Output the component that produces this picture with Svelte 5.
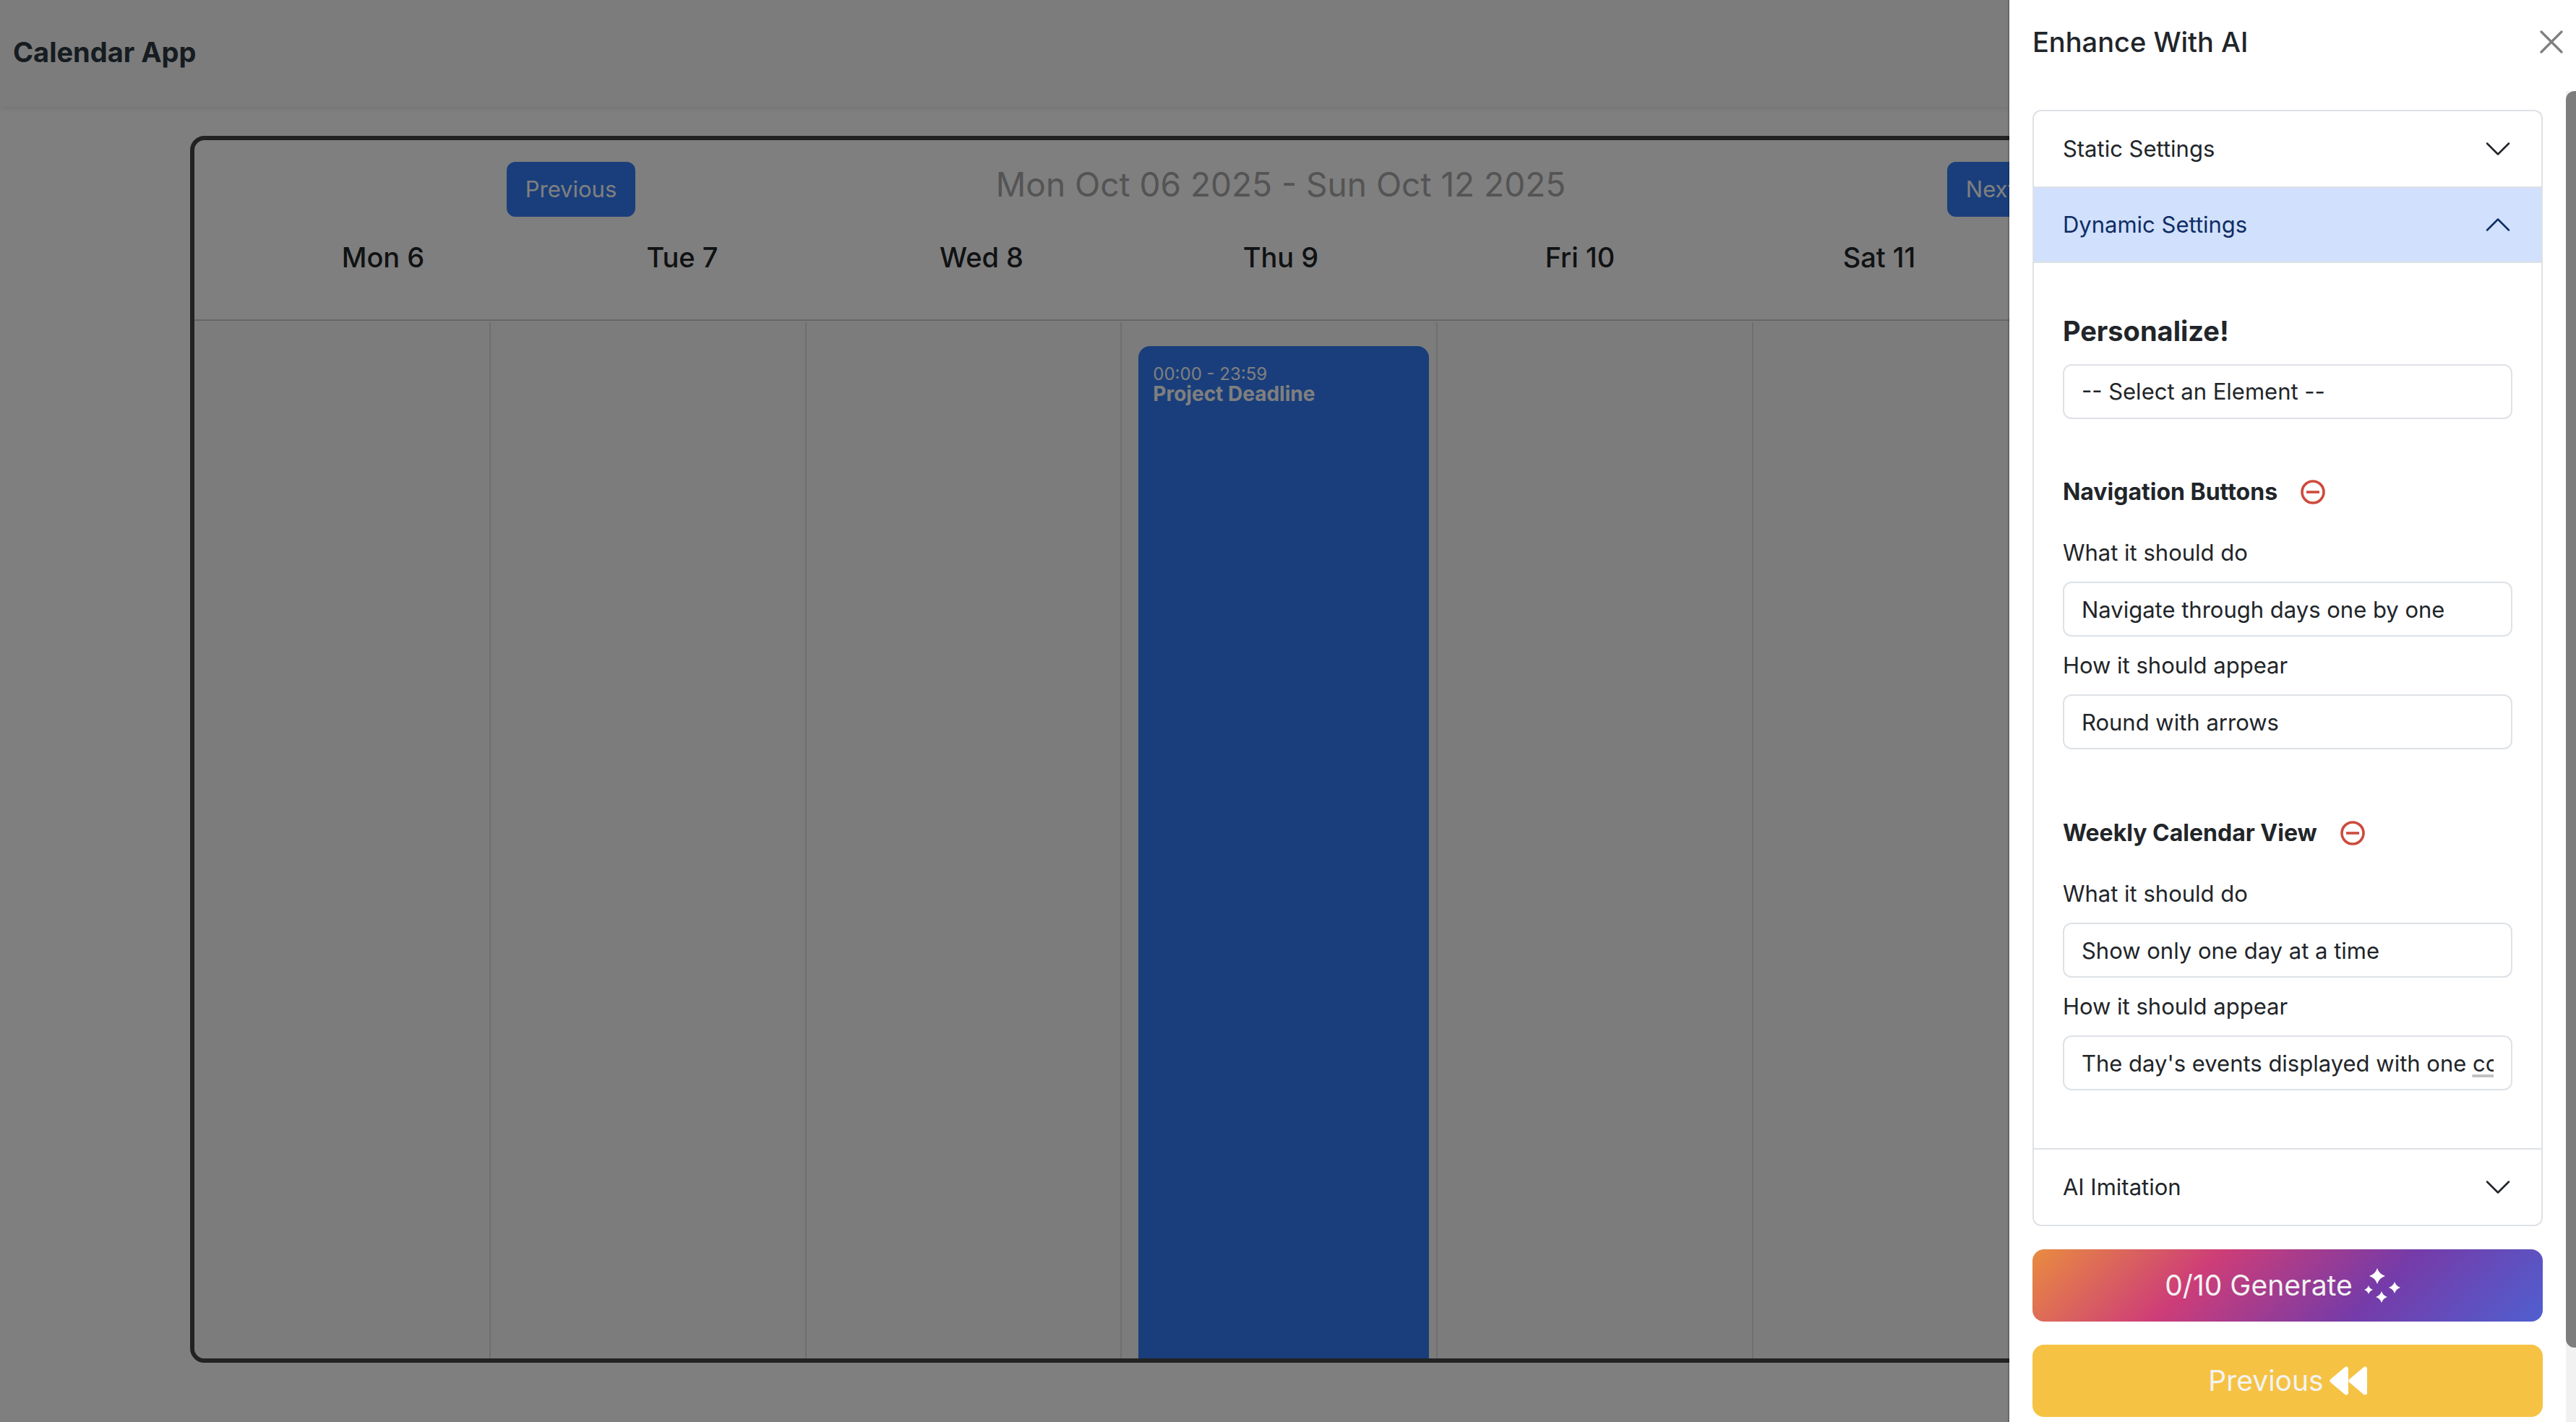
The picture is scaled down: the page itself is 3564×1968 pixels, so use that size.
<script>
  const days = ['Mon 6', 'Tue 7', 'Wed 8', 'Thu 9', 'Fri 10', 'Sat 11', 'Sun 12'];
  const events = { 3: { time: '00:00 - 23:59', title: 'Project Deadline' } };
  let groups = $state([
    { id: 'nav', name: 'Navigation Buttons', what: 'Navigate through days one by one', how: 'Round with arrows' },
    { id: 'week', name: 'Weekly Calendar View', what: 'Show only one day at a time', how: "The day's events displayed with one column", flagged: true }
  ]);

  // Four-pointed sparkle centred on (x, y) with arm length r.
  const spark = (x, y, r) => {
    const c = r * 0.24;
    return `M${x} ${y - r}Q${x + c} ${y - c} ${x + r} ${y}Q${x + c} ${y + c} ${x} ${y + r}Q${x - c} ${y + c} ${x - r} ${y}Q${x - c} ${y - c} ${x} ${y - r}Z`;
  };
  const sparks = [[18, 11, 11], [42, 27, 8], [24, 40, 8], [6, 30, 6]];
</script>

{#snippet chevron(up)}
  <svg class="chevron" class:up viewBox="0 0 16 16" aria-hidden="true">
    <path d="M2 5l6 6 6-6" fill="none" stroke="currentColor" stroke-linecap="round" stroke-linejoin="round" />
  </svg>
{/snippet}

<div class="page">
  <header class="topbar"><h1>Calendar App</h1></header>
  <main>
    <section class="calendar">
      <div class="toolbar">
        <button class="nav">Previous</button>
        <h2>Mon Oct 06 2025 - Sun Oct 12 2025</h2>
        <button class="nav">Next</button>
      </div>
      <div class="daynames">
        {#each days as day}<div>{day}</div>{/each}
      </div>
      <div class="week">
        {#each days as day, i}
          <div class="day">
            {#if events[i]}
              <article class="event">
                <span>{events[i].time}</span>
                <strong>{events[i].title}</strong>
              </article>
            {/if}
          </div>
        {/each}
      </div>
    </section>
  </main>
</div>
<div class="backdrop"></div>

<aside class="panel" aria-label="Enhance With AI">
  <div class="panel-head">
    <h2>Enhance With AI</h2>
    <button class="close" aria-label="Close">
      <svg viewBox="0 0 16 16"><path d="M1 1l14 14M15 1L1 15" stroke="currentColor" stroke-width="1.6" stroke-linecap="round" /></svg>
    </button>
  </div>
  <div class="panel-main">
    <div class="panel-body">
      <div class="accordion">
        <button class="acc">Static Settings {@render chevron(false)}</button>
        <button class="acc open" aria-expanded="true">Dynamic Settings {@render chevron(true)}</button>
        <div class="acc-body">
          <label class="personalize" for="element">Personalize!</label>
          <select id="element"><option>-- Select an Element --</option></select>
          {#each groups as g (g.id)}
            <fieldset>
              <div class="group-head">
                <h3>{g.name}</h3>
                <button aria-label="Remove {g.name}">
                  <svg viewBox="0 0 34 34"><circle cx="17" cy="17" r="15" fill="none" stroke="currentColor" stroke-width="3.6" /><path d="M8 17h18" stroke="currentColor" stroke-width="3.6" /></svg>
                </button>
              </div>
              <label for="{g.id}-what">What it should do</label>
              <input id="{g.id}-what" type="text" bind:value={g.what} />
              <label for="{g.id}-how">How it should appear</label>
              <div class="field" class:flagged={g.flagged}>
                <input id="{g.id}-how" type="text" bind:value={g.how} />
              </div>
            </fieldset>
          {/each}
        </div>
        <button class="acc">AI Imitation {@render chevron(false)}</button>
      </div>
      <button class="action generate">
        0/10 Generate
        <svg class="stars" viewBox="0 0 50 48" fill="#fff" aria-hidden="true">
          {#each sparks as [x, y, r]}<path d={spark(x, y, r)} />{/each}
        </svg>
      </button>
      <button class="action previous">
        Previous
        <svg class="rewind" viewBox="0 0 52 40" fill="#fff" stroke="#fff" stroke-width="6" stroke-linejoin="round" aria-hidden="true">
          <path d="M3.500 20L23 3.500V36.500Z" />
          <path d="M29.500 20L49 3.500V36.500Z" />
        </svg>
      </button>
    </div>
    <div class="track"><div class="thumb"></div></div>
  </div>
</aside>

<style>
  :global(body) { margin: 0; background: #fff; }
  :global(*) { box-sizing: border-box; }
  h1, h2, h3 { margin: 0; }
  button, input, select { font: inherit; color: inherit; }
  button { border: 0; background: none; padding: 0; }
  .page, .panel { font-family: Inter, 'Noto Sans', sans-serif; font-size: 31px; line-height: 48px; color: #212529; }
  .page { height: 100vh; display: flex; flex-direction: column; overflow: hidden; padding-right: 20px; }
  .topbar { flex: none; height: 148px; margin-right: -20px; padding: 48px 18px; background: #f8f9fa; box-shadow: 0 2px 8px rgba(0, 0, 0, 0.1); }
  .topbar h1 { font-size: 38px; font-weight: 700; line-height: 48px; color: #2c3840; }
  main { flex: 1; min-height: 0; display: flex; padding: 40px 263px 82px; }
  .calendar { flex: 1; min-width: 0; display: flex; flex-direction: column; border: 6px solid #444; border-radius: 20px; overflow: hidden; }
  .toolbar { flex: none; display: grid; grid-template-columns: repeat(3, 1fr); justify-items: center; align-items: start; padding: 30px 30px 0; height: 130px; }
  .toolbar h2 { font-size: 46px; font-weight: 400; line-height: 62px; color: #a8a8a8; white-space: nowrap; }
  .nav { height: 76px; padding: 0 26px; border-radius: 12px; background: #327df6; color: #fff; }
  .daynames { flex: none; display: grid; grid-template-columns: repeat(7, 1fr); height: 120px; padding: 8px 54px 0; border-bottom: 2px solid #ccc; text-align: center; font-size: 38px; font-weight: 500; }
  .week { flex: 1; min-height: 0; display: grid; grid-template-columns: 410px repeat(6, 1fr); margin-right: -24px; padding-top: 2px; background: #f8f8f8; }
  .day { border-right: 2px solid #dedede; padding: 33px 10px 0 23px; display: flex; }
  .event { flex: 1; border-radius: 16px 16px 0 0; background: #327df6; color: #fff; padding: 26px 20px; display: flex; flex-direction: column; font-size: 24px; line-height: 26px; }
  .event strong { font-size: 28px; line-height: 28px; font-weight: 700; }
  .backdrop { position: fixed; inset: 0; background: rgba(0, 0, 0, 0.5); }

  .panel { position: fixed; inset: 0 0 0 auto; width: 22vw; box-sizing: content-box; display: flex; flex-direction: column; background: #fff; background-clip: padding-box; border-left: 2px solid rgba(0, 0, 0, 0.18); }
  .panel-head { flex: none; height: 120px; padding: 0 18px 4px 32px; display: flex; align-items: center; justify-content: space-between; }
  .panel-head h2 { font-size: 38px; font-weight: 500; }
  .close { display: flex; color: #7f7f7f; }
  .close svg { width: 32px; height: 32px; }
  .panel-main { flex: 1; min-height: 0; display: flex; }
  .panel-body { flex: 1; min-width: 0; padding: 32px; display: flex; flex-direction: column; gap: 32px; overflow: hidden; }
  .accordion { flex: none; border: 2px solid #dee2e6; border-radius: 12px; overflow: hidden; }
  .acc { width: 100%; height: 104px; padding: 0 40px; display: flex; align-items: center; justify-content: space-between; text-align: left; }
  .acc.open { height: 106px; background: #d1e0fc; color: #0f2d65; border-top: 2px solid #dee2e6; border-bottom: 2px solid #dee2e6; }
  .chevron { width: 40px; height: 40px; }
  .chevron.up { transform: rotate(180deg); }
  .acc-body { padding: 70px 40px 80px; display: flex; flex-direction: column; border-bottom: 2px solid #dee2e6; }
  .personalize { font-size: 38px; font-weight: 700; margin-bottom: 22px; }
  input, select { width: 100%; height: 76px; padding: 0 24px; border: 2px solid #dee2e6; border-radius: 12px; background: #fff; appearance: none; }
  .field { display: flex; position: relative; }
  .flagged::after { content: ''; position: absolute; right: 26px; bottom: 18px; width: 30px; height: 4px; border-radius: 2px 0 0 2px; background: #c2c2c2; }
  fieldset { border: 0; margin: 77px 0 0; padding: 0; min-width: 0; display: flex; flex-direction: column; gap: 16px; }
  fieldset + fieldset { margin-top: 92px; }
  .group-head { display: flex; align-items: center; gap: 32px; margin-bottom: 20px; }
  .group-head h3 { font-size: 32px; font-weight: 700; }
  .group-head button { display: flex; color: #cd4b3d; }
  .group-head svg { width: 34px; height: 34px; }
  .action { flex: none; height: 100px; border-radius: 16px; display: flex; align-items: center; justify-content: center; color: #f3f3f3; font-size: 39px; }
  .generate { gap: 16px; padding-right: 14px; background: linear-gradient(135deg, #e98c40, #cd3d78 33%, #763ba8 66%, #505fd0); }
  .previous { gap: 8px; background: #f5c244; }
  .stars { width: 50px; height: 48px; }
  .rewind { width: 52px; height: 40px; }
  .track { width: 14px; margin-top: 6px; background: #f1f1f1; }
  .thumb { height: 94.4%; border-radius: 12px 0 0 12px; background: #7d7d7d; }
</style>
